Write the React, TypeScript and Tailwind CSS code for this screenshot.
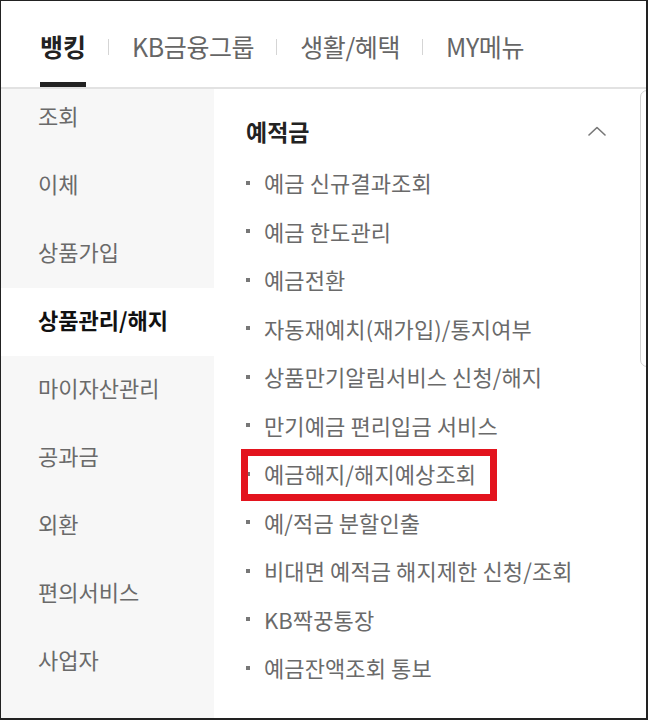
import React from "react";

const tabs = ["뱅킹", "KB금융그룹", "생활/혜택", "MY메뉴"];

const sideMenu = [
  "조회",
  "이체",
  "상품가입",
  "상품관리/해지",
  "마이자산관리",
  "공과금",
  "외환",
  "편의서비스",
  "사업자",
  "",
];

const depositItems = [
  "예금 신규결과조회",
  "예금 한도관리",
  "예금전환",
  "자동재예치(재가입)/통지여부",
  "상품만기알림서비스 신청/해지",
  "만기예금 편리입금 서비스",
  "예금해지/해지예상조회",
  "예/적금 분할인출",
  "비대면 예적금 해지제한 신청/조회",
  "KB짝꿍통장",
  "예금잔액조회 통보",
];

const font = {
  fontFamily: '"Noto Sans CJK KR", "Noto Sans", sans-serif',
};

function ChevronUp() {
  return (
    <svg width="18" height="10" viewBox="0 0 18 10" fill="none">
      <path
        d="M1 9 L9 1.5 L17 9"
        stroke="#777"
        strokeWidth="1.6"
        strokeLinecap="round"
        strokeLinejoin="round"
      />
    </svg>
  );
}

export default function App() {
  const activeTab = 0;
  const activeMenu = 3;
  const highlighted = 6;

  return (
    <div
      className="w-[648px] h-[720px] bg-white border-t border-l border-r-2 border-b-2 border-[#222] flex flex-col overflow-hidden"
      style={font}
    >
      {/* Top tabs */}
      <div className="h-[86px] flex items-stretch pl-[39px] pt-[10px] shrink-0">
        {tabs.map((tab, i) => (
          <React.Fragment key={tab}>
            {i > 0 && (
              <div className="flex items-center ml-[22px] mr-[23px] border-b-[5px] border-transparent">
                <span className="w-px h-[16px] bg-[#d5d5d5]" />
              </div>
            )}
            <div
              className={
                i === activeTab
                  ? "flex items-center border-b-[5px] border-[#222] text-[25px] font-bold text-[#222]"
                  : "flex items-center border-b-[5px] border-transparent text-[25px] text-[#666] tracking-[-0.4px]"
              }
            >
              {tab}
            </div>
          </React.Fragment>
        ))}
      </div>
      <div className="h-[2px] bg-[#e2e2e2] shrink-0" />

      {/* Body */}
      <div className="flex flex-1 min-h-0">
        {/* Left side menu */}
        <div className="w-[213px] bg-[#f7f7f7] overflow-hidden shrink-0">
          <ul className="-mt-[5px]">
            {sideMenu.map((item, i) => (
              <li
                key={i}
                className={
                  i === activeMenu
                    ? "h-[68px] flex items-center pl-[37px] pb-[6px] bg-white text-[22px] font-bold text-[#111]"
                    : "h-[68px] flex items-center pl-[37px] pb-[6px] text-[22px] text-[#6a6a6a]"
                }
              >
                {item}
              </li>
            ))}
          </ul>
        </div>

        {/* Right content */}
        <div className="flex-1 relative pl-[32px] pr-[40px]">
          <div className="mt-[27px] h-[30px] flex items-center justify-between">
            <h3 className="text-[23px] font-bold text-[#222]">예적금</h3>
            <ChevronUp />
          </div>
          <ul className="mt-[14px]">
            {depositItems.map((item, i) => (
              <li
                key={item}
                className="relative h-[48.5px] flex items-center gap-[14px] pb-[3px] text-[22px] text-[#6a6a6a] tracking-[0.1px]"
              >
                <span className="w-[4px] h-[4px] bg-[#777] shrink-0" />
                <span>{item}</span>
                {i === highlighted && (
                  <span className="absolute -left-[5px] -top-[2px] w-[256px] h-[52px] border-[7px] border-[#e3141e]" />
                )}
              </li>
            ))}
          </ul>

          {/* Scrollbar thumb */}
          <div className="absolute -right-[8px] top-[1px] w-[14px] h-[277px] border border-[#d2d2d2] rounded-[7px]" />
        </div>
      </div>
    </div>
  );
}
